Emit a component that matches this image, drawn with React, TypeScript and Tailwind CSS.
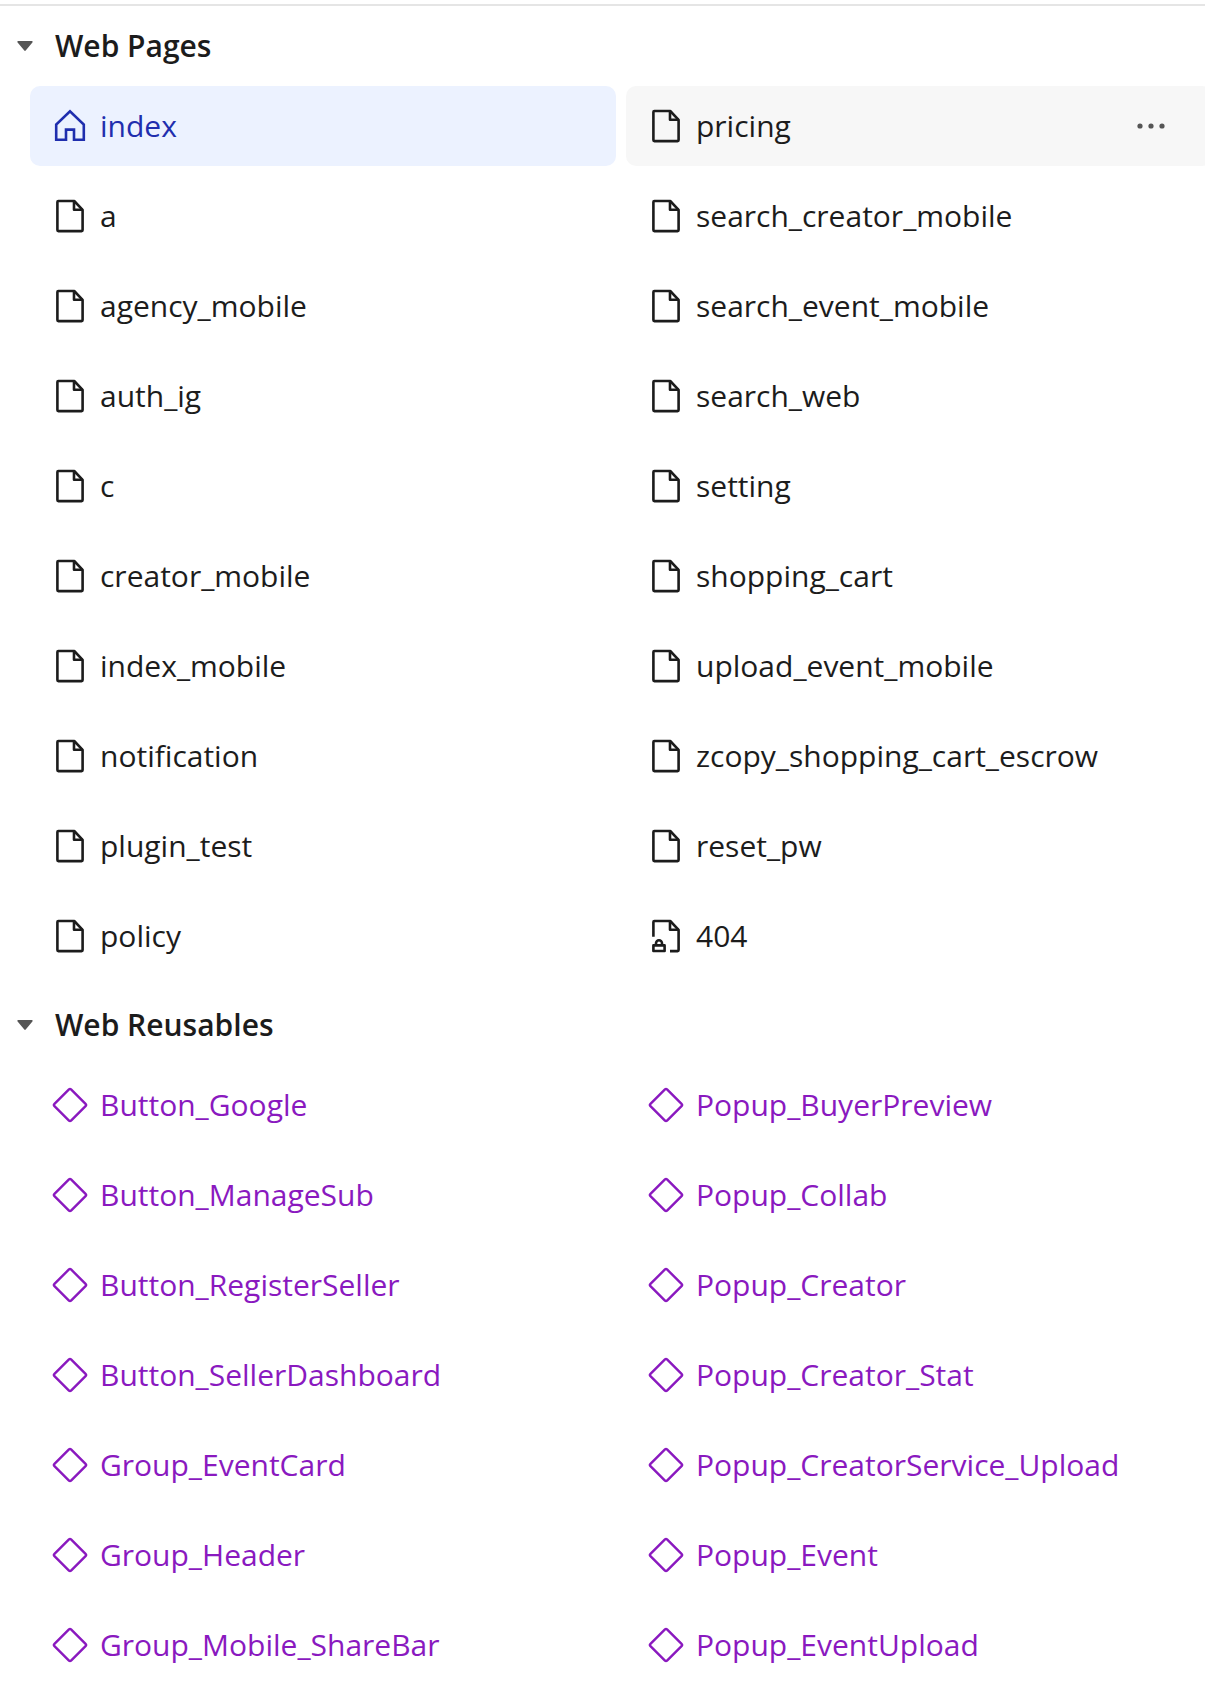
import { useState } from "react";
import type { ReactNode } from "react";

const pages = [
  "index",
  "a",
  "agency_mobile",
  "auth_ig",
  "c",
  "creator_mobile",
  "index_mobile",
  "notification",
  "plugin_test",
  "policy",
  "pricing",
  "search_creator_mobile",
  "search_event_mobile",
  "search_web",
  "setting",
  "shopping_cart",
  "upload_event_mobile",
  "zcopy_shopping_cart_escrow",
  "reset_pw",
  "404",
];

const reusables = [
  "Button_Google",
  "Button_ManageSub",
  "Button_RegisterSeller",
  "Button_SellerDashboard",
  "Group_EventCard",
  "Group_Header",
  "Group_Mobile_ShareBar",
  "Popup_BuyerPreview",
  "Popup_Collab",
  "Popup_Creator",
  "Popup_Creator_Stat",
  "Popup_CreatorService_Upload",
  "Popup_Event",
  "Popup_EventUpload",
];

function Icon({ children }: { children: ReactNode }) {
  return (
    <svg
      viewBox="0 0 36 36"
      className="size-9 shrink-0"
      fill="none"
      stroke="currentColor"
      strokeWidth="2.6"
      strokeLinejoin="round"
      aria-hidden="true"
    >
      {children}
    </svg>
  );
}

function HomeIcon() {
  return (
    <Icon>
      <path d="M4.2 31.8V16.6L18 3.2l13.8 13.4v15.2H22V21.6h-8v10.2H4.2Z" strokeLinejoin="miter" />
    </Icon>
  );
}

function PageIcon() {
  return (
    <Icon>
      <path d="M6.4 3h15.8l8.4 8.8v20.3a1 1 0 0 1-1 1H6.4a1 1 0 0 1-1-1V4a1 1 0 0 1 1-1Z" />
      <path d="M22 3v8.8h8.7" />
    </Icon>
  );
}

function LockedPageIcon() {
  return (
    <Icon>
      <path d="M5.4 18.8V4a1 1 0 0 1 1-1h15.8l8.4 8.8v20.3a1 1 0 0 1-1 1H22" />
      <path d="M22 3v8.8h8.7" />
      <path d="M5.4 27.4h11.2V33H5.4Z" />
      <path d="M8 27.4v-2.2a3 3 0 0 1 6 0v2.2" />
    </Icon>
  );
}

function ReusableIcon() {
  return (
    <Icon>
      <path
        d="M17.2 2.2a1.1 1.1 0 0 1 1.6 0l15 15a1.1 1.1 0 0 1 0 1.6l-15 15a1.1 1.1 0 0 1-1.6 0l-15-15a1.1 1.1 0 0 1 0-1.6Z"
        strokeWidth="2.4"
      />
    </Icon>
  );
}

function Section({ title, children }: { title: string; children: ReactNode }) {
  const [open, setOpen] = useState(true);

  return (
    <section>
      <h2>
        <button
          className="flex h-20 w-full items-center gap-[22px] pl-[17px] text-left font-semibold"
          aria-expanded={open}
          onClick={() => setOpen(!open)}
        >
          <svg viewBox="0 0 16 10" className="h-2.5 w-4 shrink-0 fill-[#555]" aria-hidden="true">
            <path d="M1.2 0h13.6c.9 0 1.2.8.6 1.5L8.7 9.5c-.4.5-1 .5-1.4 0L.6 1.5C0 .8.3 0 1.2 0Z" />
          </svg>
          {title}
        </button>
      </h2>
      {open && children}
    </section>
  );
}

function PageItem({ name }: { name: string }) {
  if (name === "index") {
    return (
      <li className="flex h-20 items-center rounded-[10px] bg-[#ecf2ff] px-[22px] text-[#1f2eae]">
        <a href="#index" className="flex grow items-center gap-3" aria-current="page">
          <HomeIcon />
          {name}
        </a>
      </li>
    );
  }

  return (
    <li
      className={
        name === "pricing"
          ? "flex h-20 items-center rounded-[10px] bg-[#f7f7f7] px-[22px]"
          : "flex h-20 items-center rounded-[10px] px-[22px]"
      }
    >
      <a href={`#${name}`} className="flex grow items-center gap-3">
        {name === "404" ? <LockedPageIcon /> : <PageIcon />}
        {name}
      </a>
      {name === "pricing" && (
        <button className="mr-3 flex size-[54px] items-center justify-center" aria-label="Page options">
          <svg viewBox="0 0 30 8" className="h-2 w-[30px] fill-[#555]" aria-hidden="true">
            <circle cx="4" cy="4" r="2.6" />
            <circle cx="15" cy="4" r="2.6" />
            <circle cx="26" cy="4" r="2.6" />
          </svg>
        </button>
      )}
    </li>
  );
}

export default function App() {
  return (
    <nav className="overflow-hidden bg-white pt-1 font-['Open_Sans',sans-serif] text-[30px] leading-10 text-[#1c1c1c]">
      <div className="-mr-[7px] flex flex-col gap-[9px] border-t-2 border-[#e5e5e5]">
        <Section title="Web Pages">
          <ul className="ml-[30px] grid grid-flow-col grid-cols-2 grid-rows-10 gap-2.5">
            {pages.map((name) => (
              <PageItem key={name} name={name} />
            ))}
          </ul>
        </Section>
        <Section title="Web Reusables">
          <ul className="ml-[30px] grid grid-flow-col grid-cols-2 grid-rows-7 gap-2.5 text-[#8a19bf]">
            {reusables.map((name) => (
              <li key={name} className="flex h-20 items-center px-[22px]">
                <a href={`#${name}`} className="flex grow items-center gap-3">
                  <ReusableIcon />
                  {name}
                </a>
              </li>
            ))}
          </ul>
        </Section>
      </div>
    </nav>
  );
}
